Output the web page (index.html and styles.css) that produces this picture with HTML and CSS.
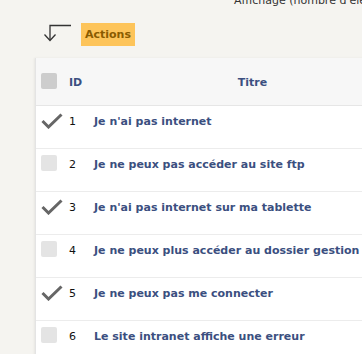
FILE: index.html
```html
<!DOCTYPE html>
<html lang="fr">
<head>
    <meta charset="UTF-8">
    <title>Tickets</title>
    <link rel="stylesheet" href="styles.css">
</head>
<body>
<div class="top-bar">
    <span class="display-label">Affichage (nombre d'éléments par page)</span>
</div>

<div class="toolbar">
    <svg class="bulk-arrow" width="30" height="18" viewBox="0 0 30 18">
        <path d="M28 1.5H7V16" fill="none" stroke="#333" stroke-width="1.3"/>
        <path d="M1.5 10.5L7 16.5L12.5 10.5" fill="none" stroke="#333" stroke-width="1.3"/>
    </svg>
    <span class="actions-btn">Actions</span>
</div>

<table class="ticket-table">
    <thead>
    <tr>
        <th class="col-check"><span class="box"></span></th>
        <th class="col-id">ID</th>
        <th class="col-title">Titre</th>
    </tr>
    </thead>
    <tbody>
    <tr>
        <td class="col-check"><svg class="tick" width="22" height="16" viewBox="0 0 22 16"><path d="M1.5 8L7.5 14L20.5 1.5" fill="none" stroke="#666" stroke-width="3"/></svg></td>
        <td class="col-id">1</td>
        <td class="col-title">Je n'ai pas internet</td>
    </tr>
    <tr>
        <td class="col-check"><span class="box light"></span></td>
        <td class="col-id">2</td>
        <td class="col-title">Je ne peux pas accéder au site ftp</td>
    </tr>
    <tr>
        <td class="col-check"><svg class="tick" width="22" height="16" viewBox="0 0 22 16"><path d="M1.5 8L7.5 14L20.5 1.5" fill="none" stroke="#666" stroke-width="3"/></svg></td>
        <td class="col-id">3</td>
        <td class="col-title">Je n'ai pas internet sur ma tablette</td>
    </tr>
    <tr>
        <td class="col-check"><span class="box light"></span></td>
        <td class="col-id">4</td>
        <td class="col-title">Je ne peux plus accéder au dossier gestion</td>
    </tr>
    <tr>
        <td class="col-check"><svg class="tick" width="22" height="16" viewBox="0 0 22 16"><path d="M1.5 8L7.5 14L20.5 1.5" fill="none" stroke="#666" stroke-width="3"/></svg></td>
        <td class="col-id">5</td>
        <td class="col-title">Je ne peux pas me connecter</td>
    </tr>
    <tr>
        <td class="col-check"><span class="box light"></span></td>
        <td class="col-id">6</td>
        <td class="col-title">Le site intranet affiche une erreur</td>
    </tr>
    </tbody>
</table>
</body>
</html>
```

FILE: styles.css
```css
body {
    margin: 0;
    background: #f5f4f0;
    font-family: "DejaVu Sans", Verdana, sans-serif;
    font-size: 11px;
    color: #222;
    overflow: hidden;
}

.top-bar {
    height: 12px;
    margin-top: -6px;
    padding-left: 234px;
    white-space: nowrap;
    color: #333;
}

.toolbar {
    display: flex;
    align-items: center;
    height: 24px;
    margin-top: 16px;
    padding-left: 43px;
}

.bulk-arrow {
    display: block;
    margin-top: -2px;
}

.actions-btn {
    display: block;
    margin-left: 8px;
    padding: 5px 4px;
    background: #fdc45a;
    color: #8a5b00;
    font-weight: bold;
    font-size: 11px;
}

.ticket-table {
    margin: 12px 0 0 35px;
    width: 376px;
    table-layout: fixed;
    border-collapse: separate;
    border-spacing: 0;
    background: #fff;
    border-left: 1px solid #e4e4e4;
    box-shadow: -1px 0 2px rgba(0, 0, 0, 0.06);
}

.ticket-table th,
.ticket-table td {
    box-sizing: border-box;
    padding: 0;
    text-align: left;
}

.ticket-table th {
    height: 48px;
    padding-top: 2px;
    background: #f7f7f7;
    color: #3b4f80;
    font-weight: bold;
    border-bottom: 1px solid #e6e6e6;
}

.ticket-table th.col-title {
    text-align: center;
}

.ticket-table td {
    height: 43px;
    padding-top: 9px;
    border-bottom: 1px solid #ececec;
    vertical-align: top;
}

.col-check {
    width: 33px;
}

.ticket-table .col-check {
    padding-left: 5px;
}

.ticket-table th.col-check .box {
    margin-top: -3px;
}

.ticket-table td.col-check {
    padding-top: 6px;
}

.ticket-table td.col-check .tick {
    margin-top: 1px;
}

.col-id {
    width: 25px;
}

.ticket-table td.col-id {
    color: #111;
}

.ticket-table td.col-title {
    color: #3b4f80;
    font-weight: bold;
    white-space: nowrap;
}

.box {
    display: block;
    width: 16px;
    height: 16px;
    border-radius: 2px;
    background: #cdcdcd;
}

.box.light {
    background: #e4e4e4;
}

.tick {
    display: block;
}
```
